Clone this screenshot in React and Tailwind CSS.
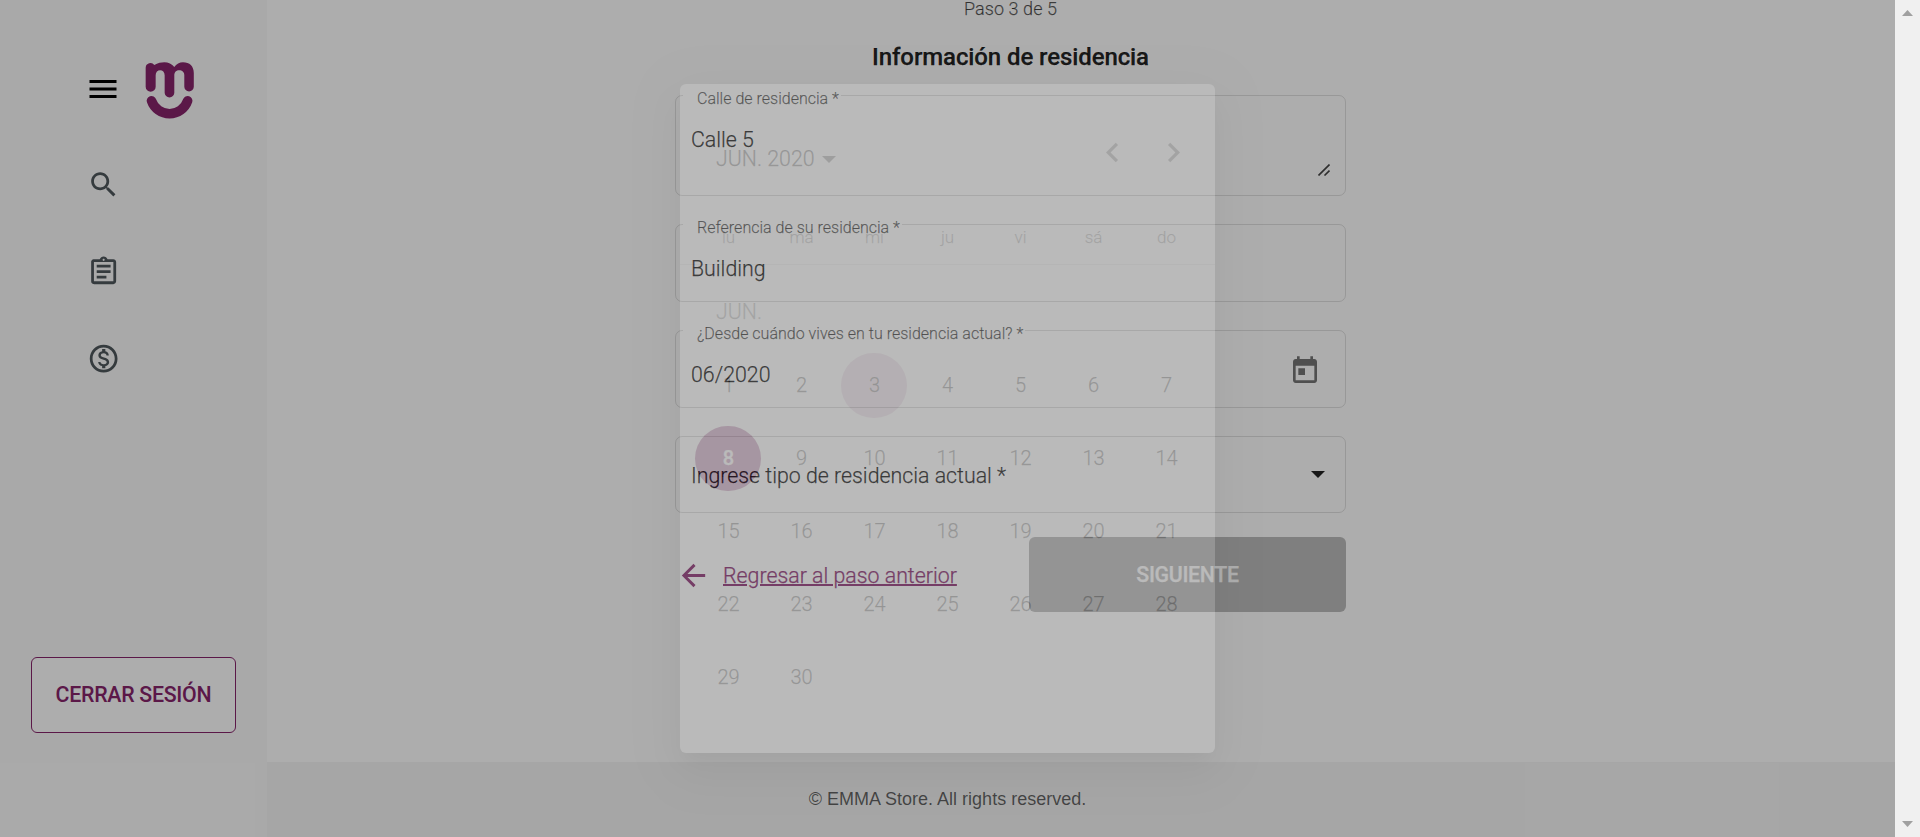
import React from "react";

const PURPLE = "#87246b";

function Icon({ d, size, className = "" }) {
  return (
    <svg viewBox="0 0 24 24" width={size} height={size} fill="currentColor" className={`shrink-0 ${className}`}>
      <path d={d} />
    </svg>
  );
}

const ICONS = {
  menu: "M3 18h18v-2H3v2zm0-5h18v-2H3v2zm0-7v2h18V6H3z",
  search:
    "M15.5 14h-.79l-.28-.27C15.41 12.59 16 11.11 16 9.5 16 5.91 13.09 3 9.5 3S3 5.91 3 9.5 5.91 16 9.5 16c1.61 0 3.09-.59 4.23-1.57l.27.28v.79l5 4.99L20.49 19l-4.99-5zm-6 0C7.01 14 5 11.99 5 9.5S7.01 5 9.5 5 14 7.01 14 9.5 11.99 14 9.5 14z",
  assignment:
    "M7 15h7v2H7zm0-4h10v2H7zm0-4h10v2H7zm12-4h-4.18C14.4 1.84 13.3 1 12 1c-1.3 0-2.4.84-2.82 2H5c-.14 0-.27.01-.4.04-.39.08-.74.28-1.01.55-.18.18-.33.4-.43.64-.1.23-.16.49-.16.77v14c0 .27.06.54.16.78s.25.45.43.64c.27.27.62.47 1.01.55.13.02.26.03.4.03h14c1.1 0 2-.9 2-2V5c0-1.1-.9-2-2-2zm-7-.25c.41 0 .75.34.75.75s-.34.75-.75.75-.75-.34-.75-.75.34-.75.75-.75zM19 19H5V5h14v14z",
  money:
    "M12 2C6.48 2 2 6.48 2 12s4.48 10 10 10 10-4.48 10-10S17.52 2 12 2zm0 18c-4.41 0-8-3.59-8-8s3.59-8 8-8 8 3.59 8 8-3.59 8-8 8zm.31-8.86c-1.77-.45-2.34-.94-2.34-1.67 0-.84.79-1.43 2.1-1.43 1.38 0 1.9.66 1.94 1.64h1.71c-.05-1.34-.87-2.57-2.49-2.97V5H10.9v1.69c-1.51.32-2.72 1.3-2.72 2.81 0 1.79 1.49 2.69 3.66 3.21 1.95.46 2.34 1.15 2.34 1.87 0 .53-.39 1.39-2.1 1.39-1.6 0-2.23-.72-2.32-1.64H8.04c.1 1.7 1.36 2.66 2.86 2.97V19h2.34v-1.67c1.52-.29 2.72-1.16 2.73-2.77-.01-2.2-1.9-2.96-3.66-3.42z",
  today:
    "M19 3h-1V1h-2v2H8V1H6v2H5c-1.11 0-1.99.9-1.99 2L3 19c0 1.1.89 2 2 2h14c1.1 0 2-.9 2-2V5c0-1.1-.9-2-2-2zm0 16H5V8h14v11zM7 10h5v5H7z",
  back: "M20 11H7.83l5.59-5.59L12 4l-8 8 8 8 1.41-1.41L7.83 13H20v-2z",
  left: "M15.41 7.41L14 6l-6 6 6 6 1.41-1.41L10.83 12z",
  right: "M10 6L8.59 7.41 13.17 12l-4.58 4.59L10 18l6-6z",
};

function Logo() {
  return (
    <svg viewBox="46 35 148 172" width="49.3" height="57.3" fill={PURPLE}>
      <path d="M48 52A14.500 14.500 0 0 1 74 44C84 38 95 36 104 36C116 36 127 41 134 50C140 41 150 36 160 36C180 36 192.500 48 192.500 68V109A14.200 14.200 0 0 1 164 109V75C164 65 157 60 149 60C140 60 134 66 134 75V127A14.500 14.500 0 0 1 105 127V75C105 66 99 60 91.500 60C84 60 78 66 78 75V109A15 15 0 0 1 48 109Z" />
      <path d="M65.500 151.500A57.300 57.300 0 0 0 174 151.500" fill="none" stroke={PURPLE} strokeWidth="29" strokeLinecap="round" />
    </svg>
  );
}

function Sidebar() {
  return (
    <aside className="flex h-full w-[267px] shrink-0 flex-col bg-[#fafafa]">
      <div className="mt-[62px] flex h-[57px] items-center gap-[24px] pl-[85px]">
        <Icon d={ICONS.menu} size={36} className="mb-[3px] text-black" />
        <Logo />
      </div>
      <nav className="mt-[49px] flex flex-col gap-[53.500px] pl-[87px] text-[#4f575c]">
        <Icon d={ICONS.search} size={33.3} />
        <Icon d={ICONS.assignment} size={33.3} />
        <Icon d={ICONS.money} size={33.3} />
      </nav>
      <button className="mt-auto mb-[104.500px] ml-[31px] flex h-[75.500px] w-[205px] items-center justify-center rounded-md border border-[#87246b] bg-white pt-[1px] text-[21.33px] font-medium tracking-[-0.28px] text-[#87246b]">
        CERRAR SESIÓN
      </button>
    </aside>
  );
}

function Field({ label, value, className, children }) {
  return (
    <div className={`relative flex w-[671px] shrink-0 rounded-[7px] border border-black/12 ${className}`}>
      {label && (
        <span className="absolute top-[-8px] left-[7px] bg-white pr-[2px] pl-[14px] text-[16px] leading-[22px] tracking-[0.01px] whitespace-nowrap text-black/60">
          {label}
        </span>
      )}
      <span className="pl-[15px] text-[21.33px] leading-[28px] text-black/87">{value}</span>
      {children}
    </div>
  );
}

function ResidenceForm() {
  return (
    <main className="flex h-[762px] flex-col bg-white pl-[408px]">
      <div className="flex w-[671px] flex-col [-webkit-text-stroke:0.25px]">
        <p className="text-center text-[18px] leading-[18px] tracking-[0.08px] text-black/60">Paso 3 de 5</p>
        <h2 className="mt-[23px] mb-[22px] text-center text-[24px] leading-[32px] font-medium tracking-[-0.1px] text-black/87">
          Información de residencia
        </h2>
        <Field label="Calle de residencia *" value="Calle 5" className="h-[101px] pt-[30px]">
          <svg viewBox="0 0 12 12" width="12" height="12" className="mt-[38px] mr-[15px] ml-auto" stroke="#444" strokeWidth="1.6">
            <path d="M0.500 11.500L11.500 0.500M6.500 11.500L11.500 6.500" />
          </svg>
        </Field>
        <Field label="Referencia de su residencia *" value="Building" className="mt-[28px] h-[78px] pt-[30px]" />
        <Field label="¿Desde cuándo vives en tu residencia actual? *" value="06/2020" className="mt-[28px] h-[78px] pt-[30px]">
          <Icon d={ICONS.today} size={32} className="mt-[-6px] mr-[24px] ml-auto text-black/54" />
        </Field>
        <Field value="Ingrese tipo de residencia actual *" className="mt-[28px] h-[77px] pt-[25px]">
          <svg viewBox="0 0 14 7" width="14" height="7" className="mt-[9px] mr-[20px] ml-auto" fill="#222">
            <path d="M0 0H14L7 7Z" />
          </svg>
        </Field>
        <div className="mt-[24px] flex items-center justify-between">
          <a className="flex items-center gap-[12.500px] pl-[0.500px] text-[21.33px] text-[#87246b]">
            <Icon d={ICONS.back} size={35} className="mt-[2px]" />
            <span className="mt-[3px] underline decoration-2">Regresar al paso anterior</span>
          </a>
          <button className="h-[75px] w-[317px] rounded-md bg-[#bbb] text-[21.33px] font-medium tracking-[-0.35px] text-white">
            SIGUIENTE
          </button>
        </div>
      </div>
    </main>
  );
}

const WEEKDAYS = ["lu", "ma", "mi", "ju", "vi", "sá", "do"];
const DAYS = Array.from({ length: 30 }, (_, i) => i + 1);

function dayClass(day) {
  if (day === 8) return "bg-[#87246b] text-white font-medium";
  if (day === 3) return "bg-[#87246b]/30 text-black/87";
  return "text-black/87";
}

function CalendarDialog() {
  return (
    <div className="flex h-[669px] w-[535px] flex-col rounded-md bg-white opacity-[0.16] shadow-[0_11px_15px_-7px_rgba(0,0,0,0.2),0_24px_38px_3px_rgba(0,0,0,0.14),0_9px_46px_8px_rgba(0,0,0,0.12)] [-webkit-text-stroke:0.25px]">
      <div className="mt-[43px] flex h-[50px] items-center pl-[36px]">
        <span className="mt-[14px] text-[21.33px] text-black/87">JUN. 2020</span>
        <svg viewBox="0 0 14 7" width="14" height="7" className="mt-[15px] ml-[7px]" fill="#555">
          <path d="M0 0H14L7 7Z" />
        </svg>
        <div className="mr-[22.500px] ml-auto flex gap-[21.500px] text-black/54">
          <Icon d={ICONS.left} size={39} />
          <Icon d={ICONS.right} size={39} />
        </div>
      </div>
      <div className="mt-[43px] flex h-[45px] border-b border-black/12 px-[12px] text-[17px] text-black/50">
        {WEEKDAYS.map((d) => (
          <span key={d} className="w-[73px] text-center leading-[34px]">
            {d}
          </span>
        ))}
      </div>
      <div className="mt-[33px] h-[50.500px] pl-[36px] text-[21.33px] leading-[28px] text-black/54">JUN.</div>
      <div className="grid grid-cols-[repeat(7,73px)] px-[11.500px]">
        {DAYS.map((day) => (
          <div key={day} className="flex h-[73px] items-center justify-center">
            <span className={`flex h-[65px] w-[66px] items-center justify-center rounded-full pl-[1px] text-[20px] ${dayClass(day)}`}>
              {day}
            </span>
          </div>
        ))}
      </div>
    </div>
  );
}

function Scrollbar() {
  return (
    <div className="flex h-full w-[25px] shrink-0 flex-col items-center justify-between bg-[#f0f0f0] pt-[10px] pb-[10px]">
      <svg viewBox="0 0 11 6" width="11" height="6" fill="#a0a0a0">
        <path d="M0 6L5.500 0L11 6Z" />
      </svg>
      <svg viewBox="0 0 11 6" width="11" height="6" fill="#a0a0a0">
        <path d="M0 0L5.500 6L11 0Z" />
      </svg>
    </div>
  );
}

export default function App() {
  return (
    <div className="flex h-[837px] w-[1920px] overflow-hidden font-['Roboto',sans-serif] font-light">
      <div className="relative flex w-[1895px] shrink-0 overflow-hidden">
        <Sidebar />
        <div className="flex flex-1 flex-col">
          <ResidenceForm />
          <footer className="flex h-[75px] items-center justify-center bg-[#f5f5f5] pr-[267px] font-['Liberation_Sans',sans-serif] text-[18px] font-normal text-black/60">
            © EMMA Store. All rights reserved.
          </footer>
        </div>
        <div className="absolute inset-0 bg-black/32" />
        <div className="absolute inset-0 flex items-center justify-center">
          <CalendarDialog />
        </div>
      </div>
      <Scrollbar />
    </div>
  );
}
